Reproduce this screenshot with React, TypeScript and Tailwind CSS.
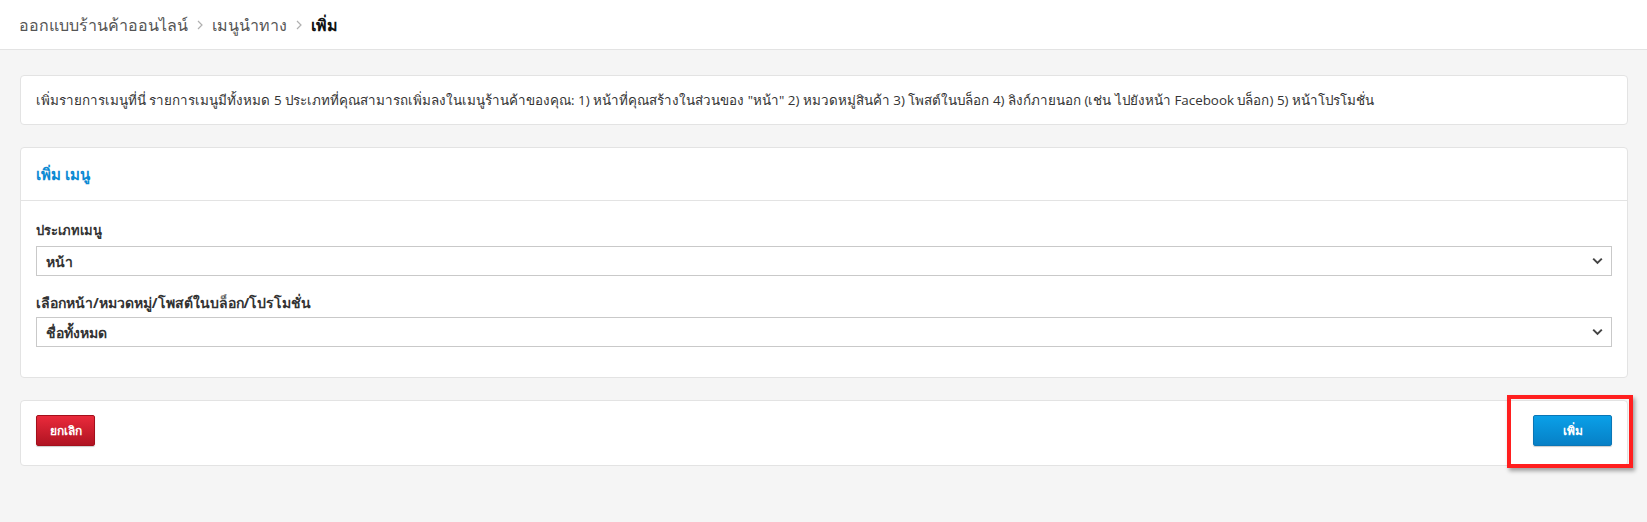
import React from "react";

const font = { fontFamily: '"Open Sans", "Noto Sans", "Liberation Sans", sans-serif' };

function Chevron() {
  return (
    <svg width="11" height="8" viewBox="0 0 11 8" className="shrink-0">
      <path d="M1.2 1.6 L5.5 5.9 L9.8 1.6" fill="none" stroke="#444" strokeWidth="2" />
    </svg>
  );
}

function Sep() {
  return (
    <svg width="14" height="14" viewBox="0 0 14 14" className="mx-[5px] shrink-0">
      <path d="M5 3 L9 7 L5 11" fill="none" stroke="#b0b0b0" strokeWidth="1.2" />
    </svg>
  );
}

function SelectBox({ value }: { value: string }) {
  return (
    <div className="h-[30px] border border-[#c9c9c9] bg-white flex items-center justify-between pl-[9px] pr-[8px] text-[14px] font-semibold text-[#333]">
      <span>{value}</span>
      <Chevron />
    </div>
  );
}

export default function App() {
  return (
    <div className="min-h-[522px] bg-[#f5f5f5]" style={font}>
      <div className="h-[50px] bg-white border-b border-[#e3e3e3] flex items-center pl-[19px] text-[16px] text-[#555]">
        <span>ออกแบบร้านค้าออนไลน์</span>
        <Sep />
        <span>เมนูนำทาง</span>
        <Sep />
        <span className="font-bold text-[#111]">เพิ่ม</span>
      </div>

      <div className="pl-[20px] pr-[19px] pt-[25px]">
        <div className="h-[50px] bg-white border border-[#e3e3e3] rounded-[4px] flex items-center px-[15px] text-[13.4px] text-[#333]">
          เพิ่มรายการเมนูที่นี่ รายการเมนูมีทั้งหมด 5 ประเภทที่คุณสามารถเพิ่มลงในเมนูร้านค้าของคุณ: 1) หน้าที่คุณสร้างในส่วนของ "หน้า" 2) หมวดหมู่สินค้า 3) โพสต์ในบล็อก 4) ลิงก์ภายนอก (เช่น ไปยังหน้า Facebook บล็อก) 5) หน้าโปรโมชั่น
        </div>

        <div className="mt-[22px] bg-white border border-[#e3e3e3] rounded-[4px]">
          <div className="h-[53px] border-b border-[#e3e3e3] flex items-center px-[15px] text-[15px] font-semibold text-[#0b8ad3]">
            เพิ่ม เมนู
          </div>
          <div className="pt-[19px] px-[15px] pb-[30px]">
            <div className="h-[20px] leading-[20px] mb-[6px] text-[13px] font-bold text-[#333]">ประเภทเมนู</div>
            <SelectBox value="หน้า" />
            <div className="mt-[17px] h-[20px] leading-[20px] mb-[4px] text-[14px] font-bold text-[#333]">
              เลือกหน้า/หมวดหมู่/โพสต์ในบล็อก/โปรโมชั่น
            </div>
            <SelectBox value="ชื่อทั้งหมด" />
          </div>
        </div>

        <div className="relative mt-[22px] bg-white border border-[#e3e3e3] rounded-[4px] pt-[14px] pb-[19px] px-[15px] flex items-start justify-between">
          <button className="h-[31px] w-[59px] rounded-[2px] border border-[#a30f1b] bg-gradient-to-b from-[#ea2a3b] to-[#b01322] text-white text-[12px] font-bold shadow-[0_1px_1px_rgba(0,0,0,0.2)]">
            ยกเลิก
          </button>
          <button className="h-[31px] w-[79px] rounded-[2px] border border-[#0a76b6] bg-gradient-to-b from-[#0aa0e8] to-[#0780c6] text-white text-[12px] font-bold shadow-[0_1px_1px_rgba(0,0,0,0.2)]">
            เพิ่ม
          </button>
          <div className="absolute right-[-6px] top-[-6px] w-[126px] h-[73px] border-[4px] border-[#ff1f1f] shadow-[2px_3px_4px_rgba(0,0,0,0.35)] pointer-events-none" />
        </div>
      </div>
    </div>
  );
}
